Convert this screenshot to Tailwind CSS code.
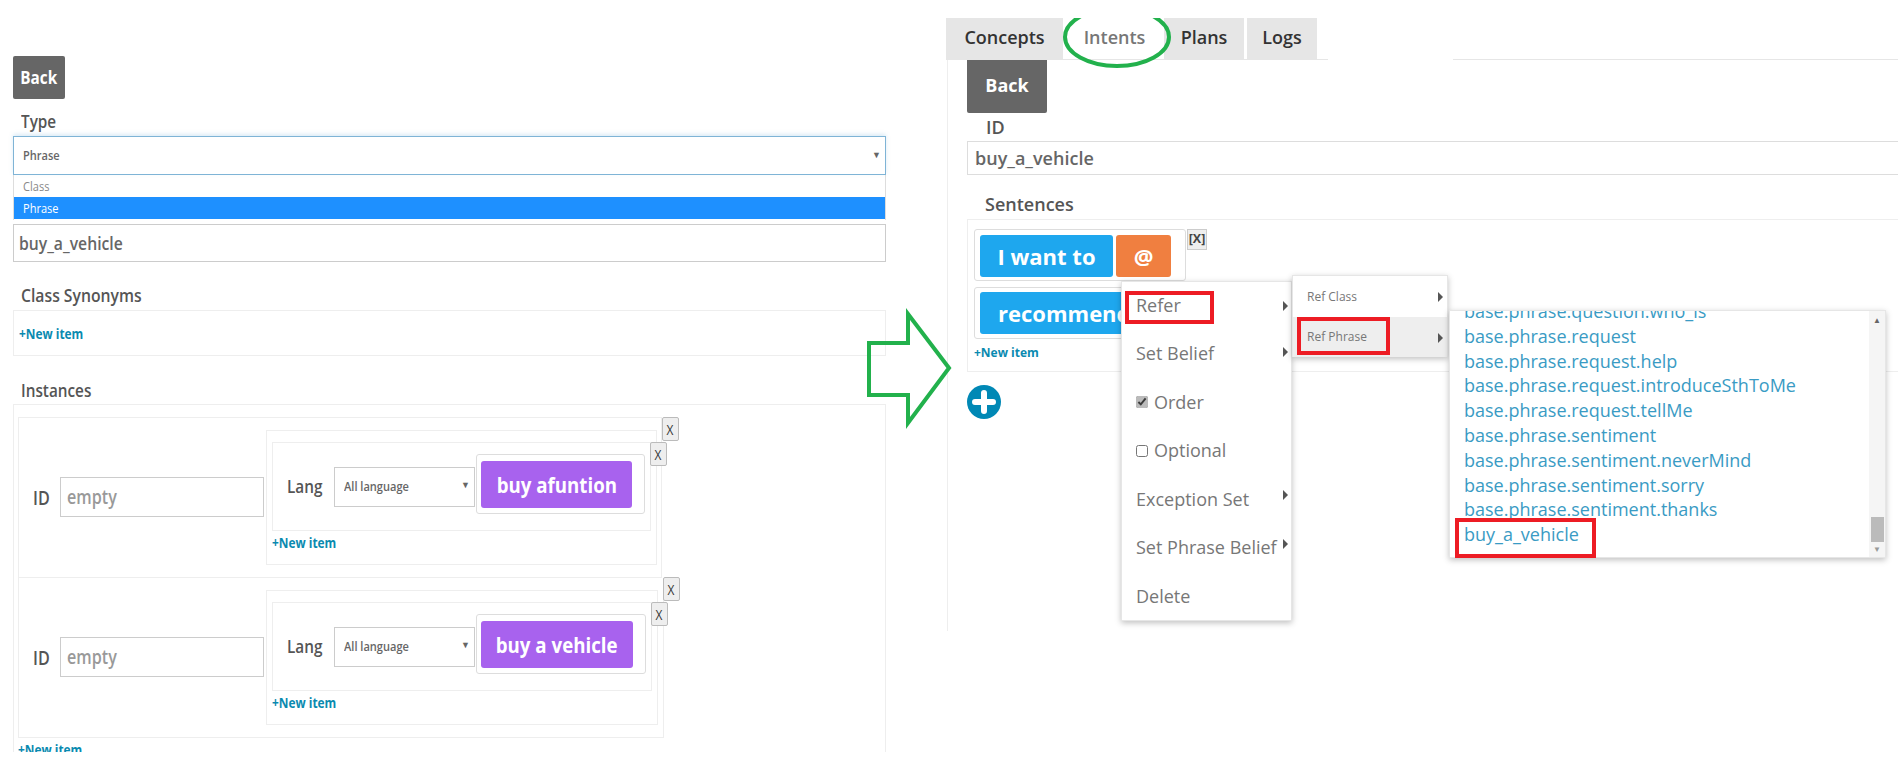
<!DOCTYPE html>
<html lang="en">
<head>
  <meta charset="UTF-8" />
  <title>Phrase and intent editor</title>
  <script src="https://cdn.jsdelivr.net/npm/@tailwindcss/browser@4"></script>
</head>
<body class="bg-white font-['Open_Sans',sans-serif] text-[#555]">
  <div class="relative w-[1898px] h-[776px] overflow-hidden flex">

    <!-- left: phrase form -->
    <section class="w-[946px] shrink-0 pl-[13px] pt-[56px]">
      <div class="w-[873px]">
        <button class="block w-[52px] h-[43px] bg-[#666] rounded-[2px] text-white text-[18px] font-bold"><span class="inline-block scale-x-[.85]">Back</span></button>
        <div class="h-[37px] pl-[8px] pt-[8px] text-[18px] leading-[28px] font-semibold"><span class="inline-block origin-left scale-x-[.85]">Type</span></div>
        <div class="relative h-[39px] border border-[#7fb4d6] shadow-[0_-2px_4px_rgba(120,180,220,.25)] flex items-center pl-[9px] pt-[1px] text-[13px] font-semibold text-[#666]">
          <span class="inline-block origin-left scale-x-[.85]">Phrase</span>
          <span class="absolute right-[4px] top-[11px] text-[9px]">▼</span>
        </div>
        <div class="h-[45px] border-x border-[#ddd] text-[13px] leading-[22px]">
          <div class="h-[22px] pl-[9px] text-[#888]"><span class="inline-block origin-left scale-x-[.85]">Class</span></div>
          <div class="h-[22px] pl-[9px] bg-[#1e90ff] text-white"><span class="inline-block origin-left scale-x-[.85]">Phrase</span></div>
        </div>
        <div class="mt-[4px] h-[38px] border border-[#ccc] flex items-center pl-[5px] text-[18.5px] font-semibold text-[#666]"><span class="inline-block origin-left scale-x-[.85]">buy_a_vehicle</span></div>
        <div class="h-[48px] pl-[8px] pt-[19px] text-[18.5px] leading-[28px] font-semibold"><span class="inline-block origin-left scale-x-[.85]">Class Synonyms</span></div>
        <div class="h-[46px] border border-[#eee] flex items-center pl-[5px] pt-[1px] text-[14px] font-bold text-[#0a8ab0]"><span class="inline-block origin-left scale-x-[.85]">+New item</span></div>
        <div class="h-[48px] pl-[8px] pt-[20px] text-[18px] leading-[28px] font-semibold"><span class="inline-block origin-left scale-x-[.85]">Instances</span></div>

        <div class="h-[348px] border-x border-t border-[#eee] pl-[4px] pt-[12px] overflow-hidden">
          <!-- instance 1 -->
          <div class="relative w-[644px] h-[161px] border border-[#eee] flex items-start pl-[14px]">
            <span class="mt-[67px] w-[27px] text-[19px] leading-[26px] font-semibold"><span class="inline-block origin-left scale-x-[.85]">ID</span></span>
            <div class="mt-[59px] w-[204px] h-[40px] border border-[#ccc] flex items-center pl-[6px] text-[19px] font-semibold text-[#999]"><span class="inline-block origin-left scale-x-[.85]">empty</span></div>
            <div class="relative ml-[2px] mt-[12px] w-[391px] h-[135px] border border-[#eee] pl-[5px] pt-[11px]">
              <div class="relative w-[379px] h-[89px] border border-[#eee] flex items-center pl-[14px]">
                <span class="w-[47px] text-[18px] font-semibold"><span class="inline-block origin-left scale-x-[.85]">Lang</span></span>
                <div class="relative w-[141px] h-[40px] border border-[#ccc] flex items-center pl-[9px] text-[13px] font-semibold text-[#666]">
                  <span class="inline-block origin-left scale-x-[.85]">All language</span>
                  <span class="absolute right-[4px] top-[10px] text-[9px]">▼</span>
                </div>
                <div class="ml-[1px] mb-[5px] w-[169px] h-[60px] border border-[#ddd] rounded-[3px] pl-[4px] pt-[6px]">
                  <div class="w-[151px] h-[47px] bg-[#a862ee] rounded-[3px] flex items-center justify-center text-white text-[22px] font-bold"><span class="inline-block scale-x-[.85] whitespace-nowrap">buy afuntion</span></div>
                </div>
                <button class="absolute left-[377px] top-[-1px] w-[17px] h-[24px] bg-[#eee] border border-[#bbb] rounded-[2px] text-[14px] text-[#333]"><span class="inline-block scale-x-[.85]">X</span></button>
              </div>
              <div class="mt-[2px] text-[14px] leading-[20px] font-bold text-[#0a8ab0]"><span class="inline-block origin-left scale-x-[.85]">+New item</span></div>
              <button class="absolute left-[395px] top-[-14px] w-[17px] h-[24px] bg-[#eee] border border-[#bbb] rounded-[2px] text-[14px] text-[#333]"><span class="inline-block scale-x-[.85]">X</span></button>
            </div>
          </div>
          <!-- instance 2 -->
          <div class="relative w-[646px] h-[160px] border border-t-0 border-[#eee] flex items-start pl-[14px]">
            <span class="mt-[67px] w-[27px] text-[19px] leading-[26px] font-semibold"><span class="inline-block origin-left scale-x-[.85]">ID</span></span>
            <div class="mt-[59px] w-[204px] h-[40px] border border-[#ccc] flex items-center pl-[6px] text-[19px] font-semibold text-[#999]"><span class="inline-block origin-left scale-x-[.85]">empty</span></div>
            <div class="relative ml-[2px] mt-[12px] w-[392px] h-[135px] border border-[#eee] pl-[5px] pt-[11px]">
              <div class="relative w-[380px] h-[89px] border border-[#eee] flex items-center pl-[14px]">
                <span class="w-[47px] text-[18px] font-semibold"><span class="inline-block origin-left scale-x-[.85]">Lang</span></span>
                <div class="relative w-[141px] h-[40px] border border-[#ccc] flex items-center pl-[9px] text-[13px] font-semibold text-[#666]">
                  <span class="inline-block origin-left scale-x-[.85]">All language</span>
                  <span class="absolute right-[4px] top-[10px] text-[9px]">▼</span>
                </div>
                <div class="ml-[1px] mb-[5px] w-[170px] h-[60px] border border-[#ddd] rounded-[3px] pl-[4px] pt-[6px]">
                  <div class="w-[152px] h-[47px] bg-[#a862ee] rounded-[3px] flex items-center justify-center text-white text-[22px] font-bold"><span class="inline-block scale-x-[.85] whitespace-nowrap">buy a vehicle</span></div>
                </div>
                <button class="absolute left-[378px] top-[-1px] w-[17px] h-[24px] bg-[#eee] border border-[#bbb] rounded-[2px] text-[14px] text-[#333]"><span class="inline-block scale-x-[.85]">X</span></button>
              </div>
              <div class="mt-[2px] text-[14px] leading-[20px] font-bold text-[#0a8ab0]"><span class="inline-block origin-left scale-x-[.85]">+New item</span></div>
              <button class="absolute left-[396px] top-[-14px] w-[17px] h-[24px] bg-[#eee] border border-[#bbb] rounded-[2px] text-[14px] text-[#333]"><span class="inline-block scale-x-[.85]">X</span></button>
            </div>
          </div>
          <div class="mt-[2px] text-[14px] leading-[20px] font-bold text-[#0a8ab0]"><span class="inline-block origin-left scale-x-[.85]">+New item</span></div>
        </div>
      </div>
    </section>

    <!-- right: intents editor -->
    <section class="flex-1 pt-[18px] min-w-0">
      <nav class="flex h-[42px] text-[18px] font-semibold text-[#333]">
        <div class="w-[117px] bg-[#e6e6e6] flex items-center justify-center pb-[3px]">Concepts</div>
        <div class="w-[3px] border-b border-[#e6e6e6]"></div>
        <div class="w-[97px] border-b border-[#e6e6e6] flex items-center justify-center pb-[3px] text-[#777]">Intents</div>
        <div class="w-[1px] border-b border-[#e6e6e6]"></div>
        <div class="w-[80px] bg-[#e6e6e6] flex items-center justify-center pb-[3px]">Plans</div>
        <div class="w-[3px] border-b border-[#e6e6e6]"></div>
        <div class="w-[70px] bg-[#e6e6e6] flex items-center justify-center pb-[3px]">Logs</div>
        <div class="w-[11px] border-b border-[#e6e6e6]"></div>
        <div class="w-[125px]"></div>
        <div class="flex-1 border-b border-[#e6e6e6]"></div>
      </nav>
      <div class="ml-[1px] h-[573px] border-l border-[#eee] pl-[19px]">
        <button class="block -mt-[2px] w-[80px] h-[55px] bg-[#666] rounded-[2px] text-white text-[18px] font-bold">Back</button>
        <div class="h-[28px] pl-[19px] text-[18px] leading-[28px] font-semibold">ID</div>
        <input value="buy_a_vehicle" class="block w-full h-[34px] border border-r-0 border-[#ddd] pl-[7px] text-[18px] font-semibold text-[#666]" />
        <div class="h-[44px] pl-[18px] pt-[15px] text-[18px] leading-[28px] font-semibold">Sentences</div>
        <div class="h-[153px] border border-r-0 border-[#eee] pl-[6px] pt-[9px]">
          <div class="relative w-[212px] h-[52px] border border-[#ddd] rounded-[3px] flex gap-[3px] pl-[5px] pt-[5px] text-white text-[22px] font-bold">
            <div class="w-[133px] h-[42px] bg-[#1ea7ee] rounded-[3px] flex items-center justify-center">I want to</div>
            <div class="w-[55px] h-[42px] bg-[#f07f40] rounded-[3px] flex items-center justify-center">@</div>
            <button class="absolute left-[212px] top-[-1px] w-[20px] h-[21px] bg-[#eee] border border-[#ccc] text-[12.5px] font-bold text-[#444]">[X]</button>
          </div>
          <div class="mt-[6px] w-[331px] h-[52px] border border-[#ddd] rounded-[3px] flex gap-[3px] pl-[5px] pt-[4px] text-white text-[22px] font-bold">
            <div class="w-[260px] h-[42px] bg-[#1ea7ee] rounded-[3px] flex items-center pl-[18px]">recommend</div>
            <div class="w-[55px] h-[42px] bg-[#f07f40] rounded-[3px] flex items-center justify-center">@</div>
          </div>
          <div class="mt-[4px] text-[12px] leading-[20px] font-bold text-[#0a8ab0]">+New item</div>
        </div>
        <svg class="mt-[13px]" width="34" height="34" viewBox="0 0 34 34"><circle cx="17" cy="17" r="17" fill="#0088b5"/><path d="M17 8v18M8 17h18" stroke="#fff" stroke-width="6" stroke-linecap="round"/></svg>
      </div>
    </section>

    <!-- context menu -->
    <div class="absolute left-[1121px] top-[281px] w-[171px] h-[340px] bg-white border border-[#e6e6e6] shadow-[0_2px_6px_rgba(0,0,0,.25)] pl-[14px] text-[18px] text-[#777]">
      <div class="relative h-[48.5px] -mt-[1px] flex items-center">Refer<span class="absolute right-[3px] top-[20px] border-y-[5px] border-l-[5px] border-y-transparent border-l-[#555]"></span></div>
      <div class="relative h-[48.5px] flex items-center">Set Belief<span class="absolute right-[3px] top-[17px] border-y-[5px] border-l-[5px] border-y-transparent border-l-[#555]"></span></div>
      <div class="h-[48.5px] flex items-center gap-[6px]"><input type="checkbox" checked class="w-[12px] h-[12px] accent-[#bbb]" />Order</div>
      <div class="h-[48.5px] flex items-center gap-[6px]"><input type="checkbox" class="w-[12px] h-[12px]" />Optional</div>
      <div class="relative h-[48.5px] flex items-center">Exception Set<span class="absolute right-[3px] top-[15px] border-y-[5px] border-l-[5px] border-y-transparent border-l-[#555]"></span></div>
      <div class="relative h-[48.5px] flex items-center whitespace-nowrap">Set Phrase Belief<span class="absolute right-[3px] top-[15px] border-y-[5px] border-l-[5px] border-y-transparent border-l-[#555]"></span></div>
      <div class="h-[48.5px] flex items-center">Delete</div>
    </div>

    <!-- submenu -->
    <div class="absolute left-[1292px] top-[275px] w-[156px] h-[82px] bg-white border border-[#e6e6e6] shadow-[0_2px_6px_rgba(0,0,0,.25)] text-[12px] text-[#777]">
      <div class="relative h-[41px] flex items-center pl-[14px]">Ref Class<span class="absolute right-[4px] top-[16px] border-y-[5px] border-l-[5px] border-y-transparent border-l-[#555]"></span></div>
      <div class="relative h-[40px] flex items-center pl-[14px] bg-[#eee]">Ref Phrase<span class="absolute right-[4px] top-[16px] border-y-[5px] border-l-[5px] border-y-transparent border-l-[#555]"></span></div>
    </div>

    <!-- phrase list -->
    <div class="absolute left-[1449px] top-[310px] w-[437px] h-[248px] bg-white border border-[#e6e6e6] shadow-[0_2px_6px_rgba(0,0,0,.25)] overflow-hidden pl-[14px] text-[18px] leading-[24.8px] text-[#3a9bc4]">
      <div class="-mt-[12px]">base.phrase.question.who_is</div>
      <div>base.phrase.request</div>
      <div>base.phrase.request.help</div>
      <div>base.phrase.request.introduceSthToMe</div>
      <div>base.phrase.request.tellMe</div>
      <div>base.phrase.sentiment</div>
      <div>base.phrase.sentiment.neverMind</div>
      <div>base.phrase.sentiment.sorry</div>
      <div>base.phrase.sentiment.thanks</div>
      <div>buy_a_vehicle</div>
      <div class="absolute right-0 top-0 w-[16px] h-full bg-[#f5f5f5] flex flex-col items-center text-[#666] text-[8px] leading-[10px]">
        <span class="mt-[4px]">▲</span>
        <div class="mt-auto w-[13px] h-[25px] bg-[#bbb]"></div>
        <span class="mt-[2px] mb-[3px] text-[#999]">▼</span>
      </div>
    </div>

    <!-- red highlights -->
    <div class="absolute left-[1125px] top-[291px] w-[89px] h-[33px] border-[4px] border-[#ed1c24]"></div>
    <div class="absolute left-[1297px] top-[317px] w-[93px] h-[38px] border-[4px] border-[#ed1c24]"></div>
    <div class="absolute left-[1455px] top-[518px] w-[141px] h-[40px] border-[4px] border-[#ed1c24]"></div>

    <!-- green annotations -->
    <svg class="absolute left-[860px] top-[305px]" width="100" height="130" viewBox="860 305 100 130" fill="none" stroke="#22b14c" stroke-width="4">
      <path d="M949 368L908 314V343H869V395H908V423Z"/>
    </svg>
    <svg class="absolute left-[1055px] top-[18px]" width="125" height="55" viewBox="1055 18 125 55" fill="none" stroke="#22b14c" stroke-width="4">
      <ellipse cx="1117" cy="37" rx="52" ry="29"/>
    </svg>
  </div>
</body>
</html>
